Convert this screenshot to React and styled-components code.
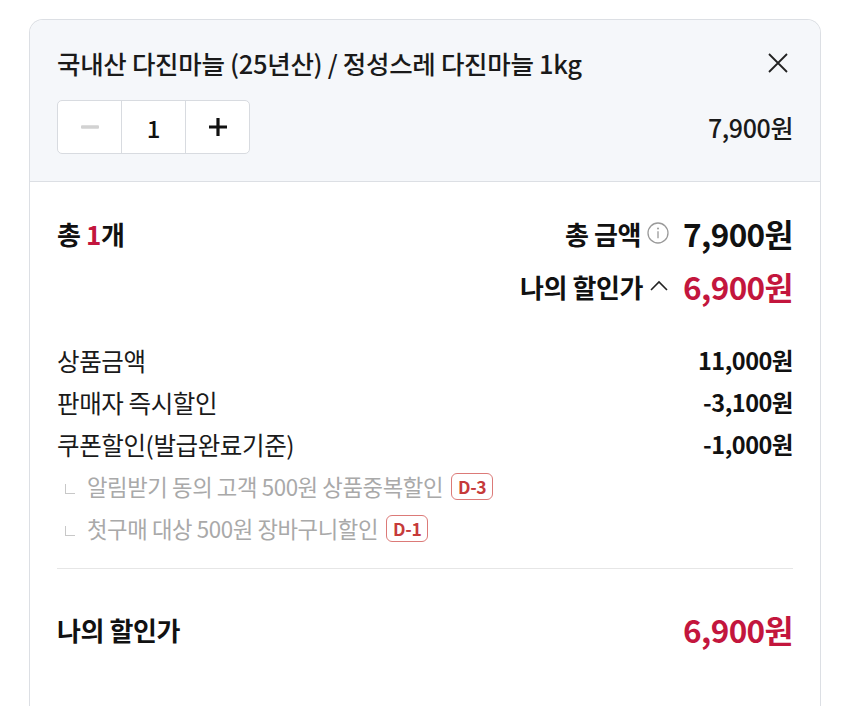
import React from "react";
import styled, { createGlobalStyle } from "styled-components";

const RED = "#c3163d";

const Global = createGlobalStyle`
  html, body { margin: 0; padding: 0; background: #fff; }
  body {
    font-family: "Noto Sans CJK KR", "Noto Sans", sans-serif;
    color: #111;
    -webkit-font-smoothing: antialiased;
  }
`;

const Page = styled.div`
  width: 850px;
  height: 706px;
  overflow: hidden;
  padding: 19px 29px 0 29px;
  box-sizing: border-box;
`;

const Card = styled.div`
  border: 1px solid #dcdfe4;
  border-bottom: none;
  border-radius: 14px 14px 0 0;
  overflow: hidden;
  background: #fff;
  min-height: 720px;
`;

const Header = styled.div`
  background: #f5f7fa;
  border-bottom: 1px solid #dcdfe4;
  padding: 28px 27px 27px 27px;
  display: flex;
  flex-direction: column;
  gap: 22px;
`;

const HeaderTop = styled.div`
  display: flex;
  align-items: center;
  justify-content: space-between;
`;

const Title = styled.div`
  font-size: 25.5px;
  line-height: 30px;
  font-weight: 500;
  letter-spacing: -0.3px;
  color: #1a1a1a;
`;

const CloseBtn = styled.button`
  border: none;
  background: none;
  padding: 0;
  margin-right: 3px;
  width: 24px;
  height: 24px;
  display: flex;
  align-items: center;
  justify-content: center;
`;

const HeaderBottom = styled.div`
  display: flex;
  align-items: center;
  justify-content: space-between;
`;

const Stepper = styled.div`
  display: flex;
  border: 1px solid #d8dbe0;
  border-radius: 5px;
  background: #fff;
  height: 52px;
  overflow: hidden;
`;

const StepCell = styled.div`
  width: 63px;
  display: flex;
  align-items: center;
  justify-content: center;
  font-size: 24px;
  font-weight: 500;
  color: #111;
  & + & { border-left: 1px solid #d8dbe0; }
`;

const HeaderPrice = styled.div`
  font-size: 25px;
  font-weight: 500;
  color: #1a1a1a;
  letter-spacing: -0.4px;
`;

const Body = styled.div`
  padding: 33px 27px 0 27px;
`;

const Summary = styled.div`
  display: flex;
  flex-direction: column;
  gap: 17px;
`;

const Line = styled.div`
  display: flex;
  align-items: center;
  justify-content: space-between;
  height: ${(p) => p.$h || 36}px;
`;

const Strong = styled.span`
  font-size: 26px;
  font-weight: 700;
  color: #111;
  letter-spacing: -0.4px;
`;

const Red = styled.span`
  color: ${RED};
`;

const RightGroup = styled.div`
  display: flex;
  align-items: center;
  gap: 6px;
`;

const Amount = styled.span`
  font-size: 31.5px;
  font-weight: 700;
  color: ${(p) => (p.$red ? RED : "#111")};
  letter-spacing: -0.6px;
  margin-left: 8px;
`;

const Breakdown = styled.div`
  margin-top: 35px;
  display: flex;
  flex-direction: column;
`;

const Label = styled.span`
  font-size: 24.5px;
  font-weight: 400;
  color: #1a1a1a;
  letter-spacing: -0.4px;
`;

const Value = styled.span`
  font-size: 23.5px;
  font-weight: 700;
  color: #111;
  letter-spacing: -0.5px;
`;

const SubLine = styled.div`
  display: flex;
  align-items: center;
  height: 42px;
  padding-left: 8px;
  gap: 10px;
`;

const Corner = styled.span`
  width: 9px;
  height: 9px;
  border-left: 1.5px solid #c8c8c8;
  border-bottom: 1.5px solid #c8c8c8;
  margin-top: 6px;
  margin-right: 2px;
`;

const SubText = styled.span`
  font-size: 22.3px;
  color: #a9a9a9;
  letter-spacing: -0.4px;
`;

const Badge = styled.span`
  display: inline-flex;
  align-items: center;
  justify-content: center;
  height: 25px;
  padding: 0 6px;
  border: 1.5px solid #dc7a78;
  border-radius: 6px;
  color: #c63a3a;
  font-size: 17.5px;
  font-weight: 700;
  margin-left: -2px;
  letter-spacing: -0.3px;
`;

const Divider = styled.hr`
  border: none;
  border-top: 1px solid #e6e6e6;
  margin: 19px 0 0 0;
`;

const Final = styled.div`
  padding-top: 42px;
`;

const InfoIcon = () => (
  <svg width="22" height="22" viewBox="0 0 22 22" fill="none">
    <circle cx="11" cy="11" r="10" stroke="#9a9a9a" strokeWidth="1.3" />
    <circle cx="11" cy="6.6" r="1" fill="#9a9a9a" />
    <path d="M11 9.3v7" stroke="#9a9a9a" strokeWidth="1.3" />
  </svg>
);

const ChevronUp = () => (
  <svg width="20" height="14" viewBox="0 0 20 14" fill="none">
    <path d="M2 11L10 3l8 8" stroke="#222" strokeWidth="1.6" />
  </svg>
);

export default function App() {
  return (
    <>
      <Global />
      <Page>
        <Card>
          <Header>
            <HeaderTop>
              <Title>국내산 다진마늘 (25년산) / 정성스레 다진마늘 1kg</Title>
              <CloseBtn aria-label="닫기">
                <svg width="22" height="22" viewBox="0 0 22 22" fill="none">
                  <path d="M2 2l18 18M20 2L2 20" stroke="#222" strokeWidth="1.8" />
                </svg>
              </CloseBtn>
            </HeaderTop>
            <HeaderBottom>
              <Stepper>
                <StepCell>
                  <svg width="18" height="4" viewBox="0 0 18 4">
                    <rect width="18" height="3.4" y="0.3" rx="1" fill="#d2d2d2" />
                  </svg>
                </StepCell>
                <StepCell>1</StepCell>
                <StepCell>
                  <svg width="20" height="20" viewBox="0 0 20 20">
                    <path d="M10 1v18M1 10h18" stroke="#111" strokeWidth="3.2" />
                  </svg>
                </StepCell>
              </Stepper>
              <HeaderPrice>7,900원</HeaderPrice>
            </HeaderBottom>
          </Header>
          <Body>
            <Summary>
              <Line>
                <Strong>
                  총 <Red>1</Red>개
                </Strong>
                <RightGroup>
                  <Strong>총 금액</Strong>
                  <InfoIcon />
                  <Amount>7,900원</Amount>
                </RightGroup>
              </Line>
              <Line>
                <span />
                <RightGroup>
                  <Strong>나의 할인가</Strong>
                  <ChevronUp />
                  <Amount $red>6,900원</Amount>
                </RightGroup>
              </Line>
            </Summary>
            <Breakdown>
              <Line $h={42}>
                <Label>상품금액</Label>
                <Value>11,000원</Value>
              </Line>
              <Line $h={42}>
                <Label>판매자 즉시할인</Label>
                <Value>-3,100원</Value>
              </Line>
              <Line $h={42}>
                <Label>쿠폰할인(발급완료기준)</Label>
                <Value>-1,000원</Value>
              </Line>
              <SubLine>
                <Corner />
                <SubText>알림받기 동의 고객 500원 상품중복할인</SubText>
                <Badge>D-3</Badge>
              </SubLine>
              <SubLine>
                <Corner />
                <SubText>첫구매 대상 500원 장바구니할인</SubText>
                <Badge>D-1</Badge>
              </SubLine>
            </Breakdown>
            <Divider />
            <Final>
              <Line>
                <Strong>나의 할인가</Strong>
                <Amount $red>6,900원</Amount>
              </Line>
            </Final>
          </Body>
        </Card>
      </Page>
    </>
  );
}
